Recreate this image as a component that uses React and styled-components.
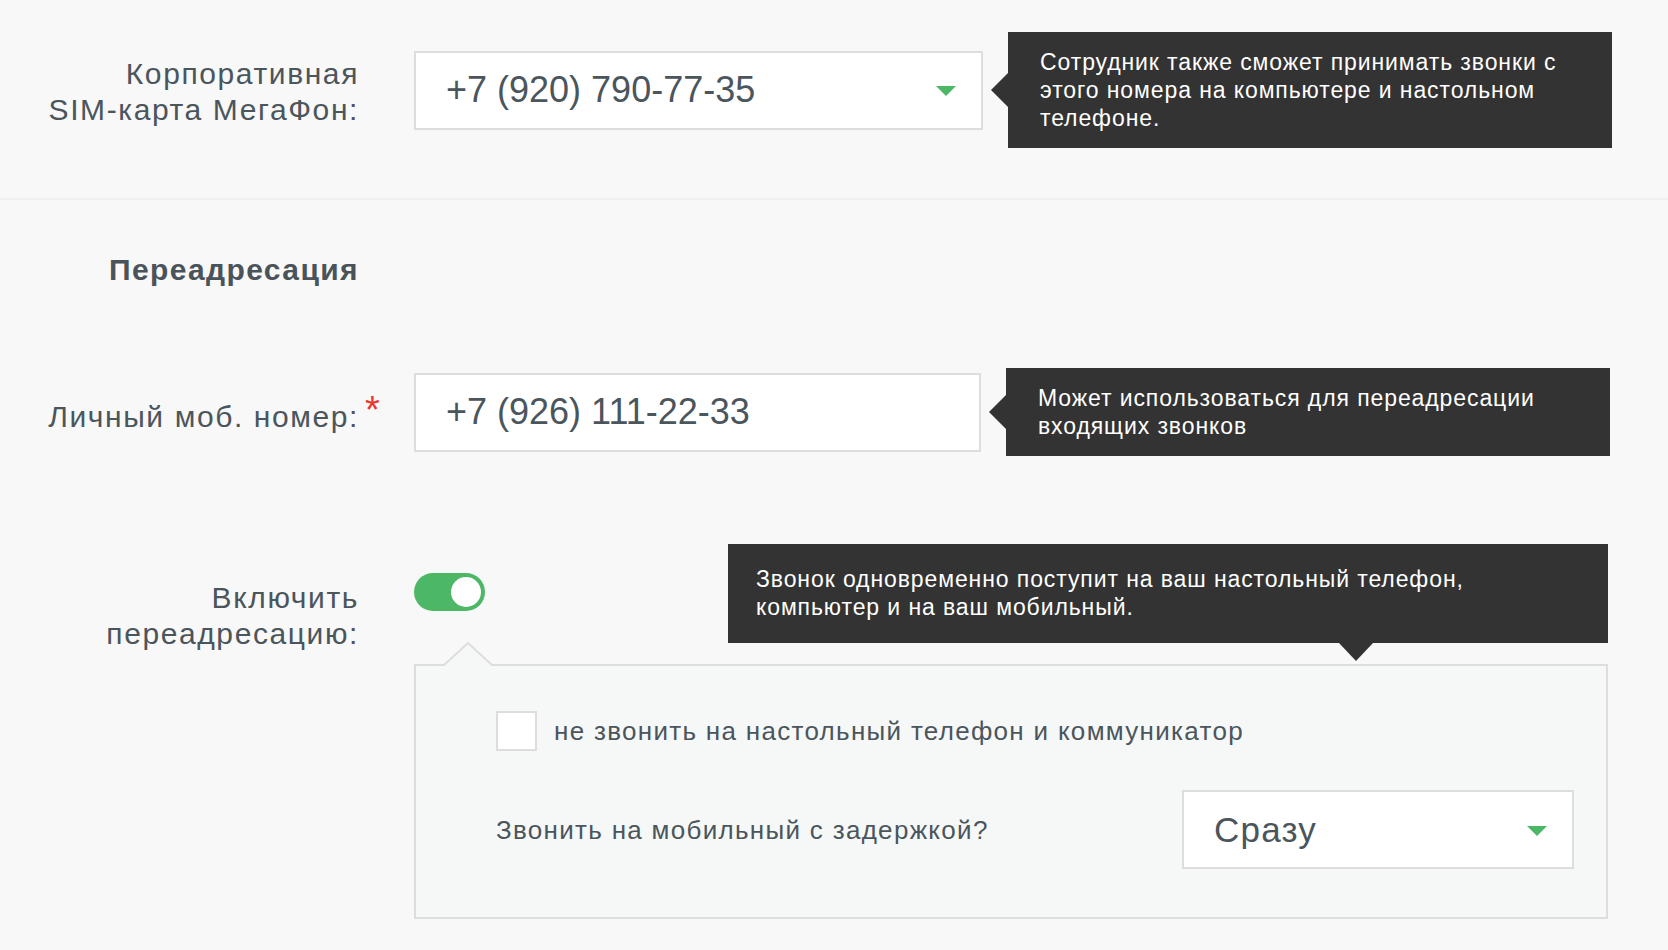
import React from 'react';
import styled, { createGlobalStyle, css } from 'styled-components';

const GlobalStyle = createGlobalStyle`
  html, body {
    margin: 0;
    padding: 0;
    background: #f8f8f8;
  }
  body {
    font-family: "Liberation Sans", Arial, sans-serif;
    color: #4b555c;
  }
`;

const Page = styled.div`
  width: 1668px;
  min-height: 950px;
  background: #f8f8f8;
`;

const TopSection = styled.section`
  padding: 32px 0 50px;
`;

const Divider = styled.hr`
  margin: 0;
  border: none;
  height: 2px;
  background: #efefef;
`;

const ForwardSection = styled.section`
  padding-top: 52px;
`;

const Row = styled.div`
  display: flex;
  align-items: ${(p) => (p.$top ? 'flex-start' : 'center')};
  margin-top: ${(p) => p.$gap || 0}px;
`;

const Label = styled.div`
  width: 359px;
  flex: none;
  text-align: right;
  font-size: 30px;
  line-height: 36px;
  letter-spacing: 1.6px;
  padding-top: ${(p) => p.$offset || 6}px;
  box-sizing: border-box;
  color: #4b555c;
`;

const LabelText = styled.span`
  position: relative;
`;

const Required = styled.span`
  position: absolute;
  left: calc(100% + 6px);
  top: -9px;
  font-size: 38px;
  line-height: 38px;
  letter-spacing: 0;
  color: #e8372f;
`;

const Heading = styled.h2`
  margin: 0;
  width: 359px;
  text-align: right;
  font-size: 30px;
  line-height: 36px;
  letter-spacing: 1.4px;
  font-weight: 700;
  color: #4a5359;
`;

const Field = styled.div`
  flex: none;
  box-sizing: border-box;
  width: ${(p) => p.$width}px;
  height: 79px;
  margin-left: ${(p) => p.$indent ?? 55}px;
  display: flex;
  align-items: center;
  justify-content: space-between;
  padding: 0 25px 0 ${(p) => p.$pad || 30}px;
  background: #fff;
  border: 2px solid #dddddd;
  font-size: ${(p) => p.$size || 36}px;
  letter-spacing: ${(p) => p.$track || 0}px;
  color: #4b555c;
`;

const Caret = styled.span`
  width: 0;
  height: 0;
  border-left: 10px solid transparent;
  border-right: 10px solid transparent;
  border-top: 10px solid #4cb866;
  margin-top: 2px;
`;

const Tip = styled.div`
  position: relative;
  flex: none;
  box-sizing: border-box;
  width: ${(p) => p.$width}px;
  margin-left: ${(p) => (p.$push ? 'auto' : '25px')};
  padding: ${(p) => p.$pad || '16px 32px'};
  background: #333333;
  color: #ffffff;
  font-size: 23px;
  line-height: 28px;
  letter-spacing: 0.9px;

  &::before {
    content: '';
    position: absolute;
    width: 0;
    height: 0;
    ${(p) =>
      p.$down
        ? css`
            bottom: -18px;
            right: 235px;
            border-left: 17px solid transparent;
            border-right: 17px solid transparent;
            border-top: 18px solid #333333;
          `
        : css`
            left: -17px;
            top: 50%;
            margin-top: -17px;
            border-top: 17px solid transparent;
            border-bottom: 17px solid transparent;
            border-right: 17px solid #333333;
          `}
  }
`;

const Column = styled.div`
  flex: none;
  width: 1194px;
  margin-left: 55px;
`;

const SwitchLine = styled.div`
  display: flex;
  align-items: center;
`;

const Toggle = styled.div`
  flex: none;
  box-sizing: border-box;
  width: 71px;
  height: 38px;
  margin-top: -4px;
  padding: 4px;
  border-radius: 19px;
  background: #4cb866;
  display: flex;
  justify-content: flex-end;
  align-items: center;
`;

const Knob = styled.span`
  width: 30px;
  height: 30px;
  border-radius: 50%;
  background: #fff;
`;

const Panel = styled.div`
  position: relative;
  margin-top: 21px;
  box-sizing: border-box;
  border: 2px solid #dddddd;
  background: #f6f8f8;
  padding: 45px 32px 48px 80px;
`;

const Notch = styled.svg`
  position: absolute;
  top: -24px;
  left: 28px;
`;

const CheckRow = styled.label`
  display: flex;
  align-items: center;
  gap: 17px;
  font-size: 26px;
  line-height: 32px;
  letter-spacing: 1.3px;
  color: #4b555c;
`;

const Box = styled.span`
  flex: none;
  box-sizing: border-box;
  width: 41px;
  height: 40px;
  background: #fff;
  border: 2px solid #dddddd;
`;

const DelayRow = styled.div`
  display: flex;
  align-items: center;
  justify-content: space-between;
  margin-top: 39px;
  font-size: 26px;
  line-height: 32px;
  letter-spacing: 1.3px;
  color: #4b555c;
`;

export default function App() {
  return (
    <Page>
      <GlobalStyle />
      <TopSection>
        <Row>
          <Label $offset={4}>
            Корпоративная
            <br />
            SIM-карта МегаФон:
          </Label>
          <Field $width={569}>
            <span>+7 (920) 790-77-35</span>
            <Caret />
          </Field>
          <Tip $width={604}>
            Сотрудник также сможет принимать звонки с
            <br />
            этого номера на компьютере и настольном
            <br />
            телефоне.
          </Tip>
        </Row>
      </TopSection>
      <Divider />
      <ForwardSection>
        <Heading>Переадресация</Heading>
        <Row $gap={80}>
          <Label $offset={10}>
            <LabelText>
              Личный моб. номер:
              <Required>*</Required>
            </LabelText>
          </Label>
          <Field $width={567}>
            <span>+7 (926) 111-22-33</span>
          </Field>
          <Tip $width={604}>
            Может использоваться для переадресации
            <br />
            входящих звонков
          </Tip>
        </Row>
        <Row $gap={88} $top>
          <Label $offset={36}>
            Включить
            <br />
            переадресацию:
          </Label>
          <Column>
            <SwitchLine>
              <Toggle>
                <Knob />
              </Toggle>
              <Tip $width={880} $push $down $pad="21px 28px 22px">
                Звонок одновременно поступит на ваш настольный телефон,
                <br />
                компьютер и на ваш мобильный.
              </Tip>
            </SwitchLine>
            <Panel>
              <Notch width="48" height="24" viewBox="0 0 48 24">
                <polygon points="0,24 24,1 48,24" fill="#f6f8f8" />
                <polyline
                  points="0,23 24,1 48,23"
                  fill="none"
                  stroke="#dddddd"
                  strokeWidth="2"
                />
              </Notch>
              <CheckRow>
                <Box />
                не звонить на настольный телефон и коммуникатор
              </CheckRow>
              <DelayRow>
                <span>Звонить на мобильный с задержкой?</span>
                <Field $width={392} $indent={0} $size={35} $track={1.2}>
                  <span>Сразу</span>
                  <Caret />
                </Field>
              </DelayRow>
            </Panel>
          </Column>
        </Row>
      </ForwardSection>
    </Page>
  );
}
